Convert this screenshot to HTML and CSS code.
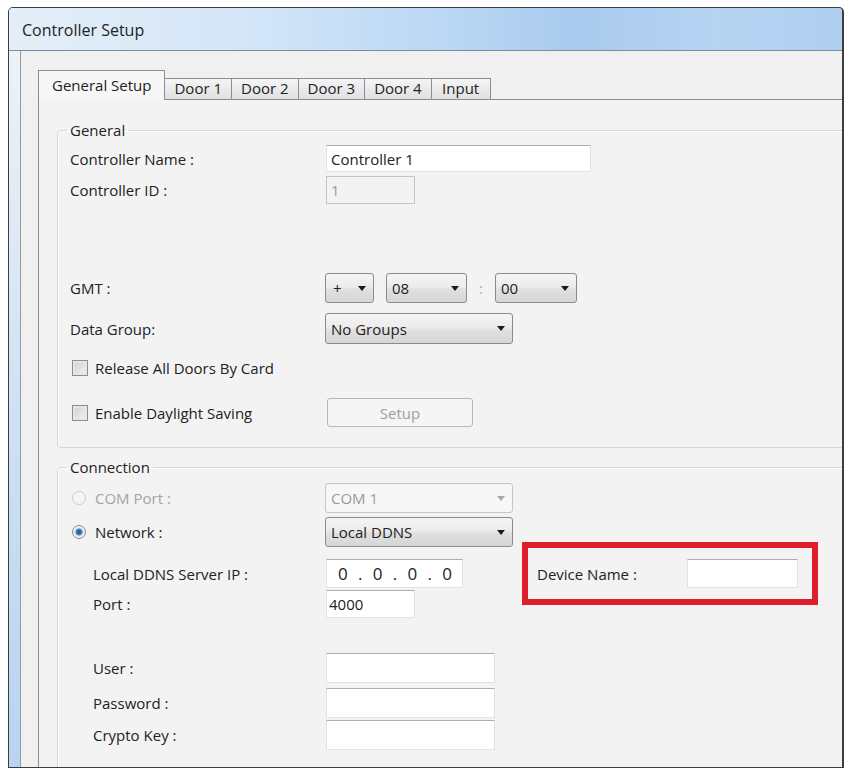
FILE: index.html
```html
<!DOCTYPE html>
<html>
<head>
	<title>Controller Setup</title>
	<link rel="stylesheet" href="styles.css">
</head>
<body>
	<!-- Dialog Window -->
	<div class="window">
		<div class="titlebar">Controller Setup</div>
		<div class="frame">
			<div class="frame-edge"></div>
			<div class="client">

				<!-- Tabs -->
				<ul class="tabs">
					<li class="tab active">General Setup</li>
					<li class="tab">Door 1</li>
					<li class="tab">Door 2</li>
					<li class="tab">Door 3</li>
					<li class="tab">Door 4</li>
					<li class="tab">Input</li>
				</ul>

				<div class="panel">
					<!-- General -->
					<fieldset class="group">
						<legend>General</legend>
						<div class="row row-name">
							<span class="label">Controller Name :</span>
							<input class="textbox tb-name" type="text" value="Controller 1">
						</div>
						<div class="row row-id">
							<span class="label">Controller ID :</span>
							<input class="textbox tb-id" type="text" value="1" disabled>
						</div>
						<div class="row row-gmt">
							<span class="label">GMT :</span>
							<div class="combo cb-sign">+</div>
							<div class="combo cb-hour">08</div>
							<span class="colon">:</span>
							<div class="combo cb-min">00</div>
						</div>
						<div class="row row-datagroup">
							<span class="label">Data Group:</span>
							<div class="combo cb-wide cb-groups">No Groups</div>
						</div>
						<div class="row row-release">
							<span class="check"></span>
							<span>Release All Doors By Card</span>
						</div>
						<div class="row row-daylight">
							<span class="label label-check"><span class="check"></span>Enable Daylight Saving</span>
							<div class="button disabled">Setup</div>
						</div>
					</fieldset>

					<!-- Connection -->
					<fieldset class="group group-connection">
						<legend>Connection</legend>
						<div class="row row-com">
							<span class="label label-check disabled"><span class="radio disabled"></span>COM Port :</span>
							<div class="combo cb-wide disabled">COM 1</div>
						</div>
						<div class="row row-network">
							<span class="label label-check"><span class="radio checked"></span>Network :</span>
							<div class="combo cb-wide">Local DDNS</div>
						</div>
						<div class="row row-ip">
							<span class="label indent">Local DDNS Server IP :</span>
							<div class="textbox tb-ip">
								<span>0</span><span>.</span><span>0</span><span>.</span><span>0</span><span>.</span><span>0</span>
							</div>
							<div class="highlight">
								<span>Device Name :</span>
								<input class="textbox tb-device" type="text">
							</div>
						</div>
						<div class="row row-port">
							<span class="label indent">Port :</span>
							<input class="textbox tb-port" type="text" value="4000">
						</div>
						<div class="row row-user">
							<span class="label indent">User :</span>
							<input class="textbox tb-login" type="text">
						</div>
						<div class="row row-password">
							<span class="label indent">Password :</span>
							<input class="textbox tb-login" type="password">
						</div>
						<div class="row row-crypto">
							<span class="label indent">Crypto Key :</span>
							<input class="textbox tb-login" type="text">
						</div>
					</fieldset>
				</div>
			</div>
		</div>
	</div>
</body>
</html>
```

FILE: styles.css
```css
body {
	margin: 0;
	background-color: #fff;
	font-family: "Open Sans", "Liberation Sans", sans-serif;
	font-size: 15px;
	color: #222;
}

/* Window frame */
.window {
	box-sizing: border-box;
	width: 836px;
	height: 761px;
	margin: 7px 0 0 8px;
	border: 1px solid #3d3d3d;
	border-right-width: 2px;
	border-radius: 5px 5px 0 0;
	display: flex;
	flex-direction: column;
	overflow: hidden;
	background-color: #f0f0f0;
}

.titlebar {
	height: 42px;
	flex-shrink: 0;
	padding-left: 13px;
	line-height: 44px;
	font-size: 16px;
	color: #1e1e1e;
	border-bottom: 1px solid #7d8a97;
	background: linear-gradient(to right, #e4eef8 0%, #d5e6f8 28%, #bdd9f5 50%, #aacbee 68%, #b6d3f2 85%, #b0cff0 100%);
}

.frame {
	flex: 1;
	display: flex;
	min-height: 0;
}

.frame-edge {
	width: 11px;
	border-right: 1px solid #8f9aa5;
	background: linear-gradient(#eef2f6, #cfe1f4 50%, #b7d4f1);
}

.client {
	flex: 1;
	min-width: 0;
	padding: 19px 0 0 17px;
	display: flex;
	flex-direction: column;
}

/* Tabs */
.tabs {
	list-style: none;
	margin: 0;
	padding: 0;
	height: 29px;
	display: flex;
	align-items: flex-end;
}

.tab {
	box-sizing: border-box;
	min-width: 59px;
	height: 21px;
	padding: 0 9px;
	line-height: 18px;
	text-align: center;
	border: 1px solid #8a8d93;
	border-left: none;
	border-bottom: none;
	background: linear-gradient(#f5f5f5, #e0e0e0);
}

.tab.active {
	position: relative;
	z-index: 1;
	height: 30px;
	margin-bottom: -1px;
	padding: 0 13px;
	line-height: 28px;
	border-left: 1px solid #8a8d93;
	background: #f7f7f7;
}

.panel {
	flex: 1;
	min-height: 0;
	overflow: hidden;
	border-top: 1px solid #8a8d93;
	border-left: 1px solid #8a8d93;
	background-color: #f3f3f3;
}

/* Group boxes */
.group {
	width: 820px;
	margin: 21px 0 0 18px;
	padding: 0 12px 20px;
	border: 1px solid #d6d6d6;
	border-radius: 4px;
	box-shadow: inset 1px 1px 0 #fff;
}

.group legend {
	margin-left: -3px;
	padding: 0 3px;
	line-height: 18px;
}

.group-connection {
	margin-top: 10px;
}

.row {
	display: flex;
	align-items: center;
}

.row-name { margin-top: 6px; height: 27px; }
.row-id { margin-top: 4px; height: 28px; }
.row-gmt { margin-top: 69px; height: 30px; }
.row-datagroup { margin-top: 10px; height: 31px; }
.row-release { margin-top: 12px; height: 24px; }
.row-daylight { margin-top: 18px; height: 29px; }

.row-com { margin-top: 7px; height: 30px; }
.row-network { margin-top: 4px; height: 30px; }
.row-ip { margin-top: 12px; height: 29px; }
.row-port { margin-top: 2px; height: 28px; }
.row-user { margin-top: 35px; height: 30px; }
.row-password { margin-top: 5px; height: 30px; }
.row-crypto { margin-top: 2px; height: 30px; }

.label {
	box-sizing: border-box;
	width: 255px;
	flex-shrink: 0;
}

.label.indent {
	padding-left: 23px;
}

.label-check {
	display: flex;
	align-items: center;
}

.label.disabled {
	color: #a3a3a3;
}

/* Controls */
.textbox {
	box-sizing: border-box;
	height: 100%;
	margin: 0 0 0 1px;
	padding: 0 4px;
	font: inherit;
	color: #222;
	background-color: #fff;
	border: 1px solid #dfe3e8;
	border-top-color: #abadb3;
	outline: none;
}

.textbox:disabled {
	background-color: #f3f3f3;
	border-color: #c6c6c6;
	color: #9a9a9a;
}

.tb-name { width: 265px; }
.tb-id { width: 89px; }
.tb-port { width: 89px; padding-left: 2px; }
.tb-login { width: 169px; }

.tb-ip {
	width: 137px;
	padding: 0 10px 0 11px;
	display: flex;
	align-items: center;
	justify-content: space-between;
	font-size: 17px;
}

.highlight {
	box-sizing: border-box;
	flex-shrink: 0;
	width: 296px;
	height: 63px;
	margin-left: 59px;
	padding: 0 14px 0 9px;
	border: 6px solid #dc1f2a;
	display: flex;
	align-items: center;
	justify-content: space-between;
}

.tb-device {
	width: 111px;
	height: 29px;
}

.combo {
	box-sizing: border-box;
	height: 100%;
	padding: 0 7px 0 5px;
	display: flex;
	align-items: center;
	justify-content: space-between;
	border: 1px solid #8b8b8b;
	border-radius: 3px;
	background: linear-gradient(#f4f4f4, #ececec 45%, #e0e0e0 55%, #d6d6d6);
}

.combo::after {
	content: "";
	border-left: 4px solid transparent;
	border-right: 4px solid transparent;
	border-top: 5px solid #1a1a1a;
}

.combo.disabled {
	color: #9a9a9a;
	border-color: #c6c6c6;
	background: #f7f7f7;
}

.combo.disabled::after {
	border-top-color: #a8a8a8;
}

.cb-sign { width: 49px; padding-left: 7px; }
.cb-hour { width: 81px; margin-left: 12px; }
.cb-min { width: 82px; }
.cb-wide { width: 188px; }

.colon {
	width: 28px;
	text-align: center;
	color: #ababab;
}

.button {
	box-sizing: border-box;
	width: 146px;
	height: 100%;
	margin-left: 2px;
	border: 1px solid #b8b8b8;
	border-radius: 3px;
	background-color: #f5f5f5;
	display: flex;
	align-items: center;
	justify-content: center;
}

.button.disabled {
	color: #9e9e9e;
}

.check {
	box-sizing: border-box;
	width: 16px;
	height: 16px;
	margin: 0 7px 0 2px;
	flex-shrink: 0;
	border: 1px solid #8f8f8f;
	background: linear-gradient(135deg, #cfcfcf, #f3f3f3);
	box-shadow: inset 0 0 0 2px #e6e6e6;
}

.radio {
	box-sizing: border-box;
	width: 14px;
	height: 14px;
	margin: 0 9px 0 2px;
	flex-shrink: 0;
	border-radius: 50%;
	border: 1px solid #8a8a8a;
	background: radial-gradient(circle, #f8f8f8, #dcdcdc);
}

.radio.disabled {
	border-color: #cdcdcd;
	background: #f5f5f5;
}

.radio.checked {
	background: radial-gradient(circle, #1f4f80 0, #4a86c2 3px, #dfe6ee 4px, #f4f4f4 6px);
}
```
